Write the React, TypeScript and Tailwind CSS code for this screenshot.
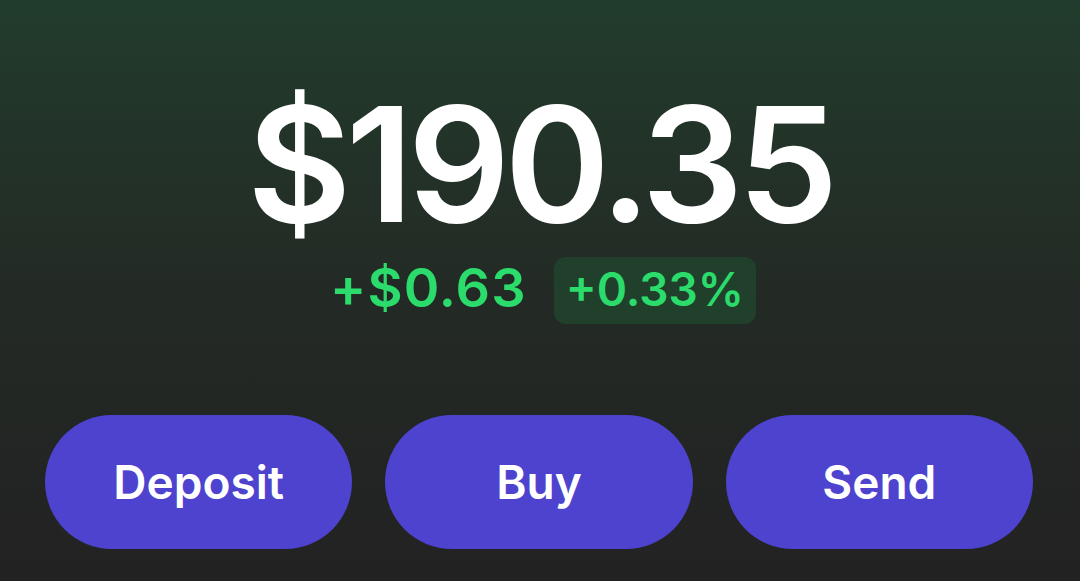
const ACTIONS = ['Deposit', 'Buy', 'Send'];

export default function App() {
  return (
    <div
      className="flex h-[581px] w-[1080px] flex-col items-center bg-gradient-to-b from-[#213c2c] via-[#232a25] to-[#222222] text-white"
      style={{ fontFamily: 'Inter, "Noto Sans", sans-serif' }}
    >
      {/* Balance */}
      <div className="mt-[84px] text-[160px] font-semibold leading-none tracking-[-0.035em]">
        $190.35
      </div>

      {/* Change */}
      <div className="mt-[13px] flex items-start gap-[27px] pl-[6px]">
        <span className="mt-[4px] text-[54px] font-semibold leading-none tracking-[0.02em] text-[#2bdb6b]">
          +$0.63
        </span>
        <span className="flex h-[67px] items-center rounded-[12px] bg-[#21402c] px-[12px] pb-[4px] text-[46px] font-semibold leading-none text-[#2bdb6b]">
          +0.33%
        </span>
      </div>

      {/* Actions */}
      <div className="mt-[91px] flex w-full gap-[33px] pl-[45px] pr-[47px]">
        {ACTIONS.map((a) => (
          <button
            key={a}
            className="flex h-[134px] flex-1 items-center justify-center rounded-full bg-[#4e43cf] text-[46px] font-semibold text-white"
          >
            {a}
          </button>
        ))}
      </div>
    </div>
  );
}
